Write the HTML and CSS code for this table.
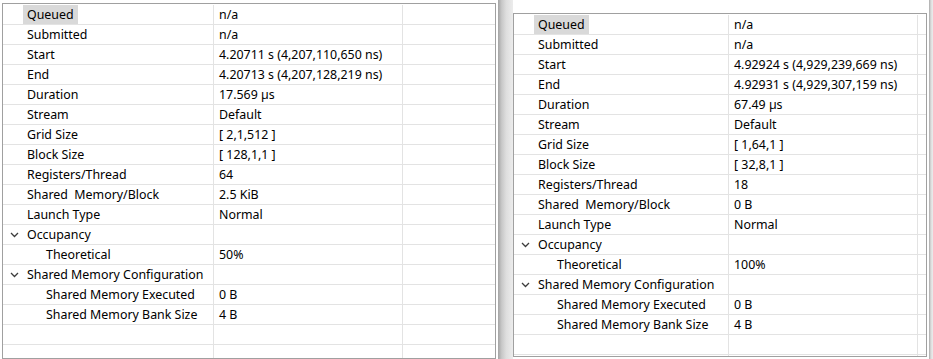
FILE: index.html
```html
<!DOCTYPE html>
<html lang="en">
<head>
  <meta charset="UTF-8">
  <title>Kernel Properties</title>
  <link rel="stylesheet" href="styles.css">
</head>
<body>
  <div class="view">

    <div class="panel left">
      <div class="row"><div class="cell name"><span class="current">Queued</span></div><div class="cell">n/a</div><div class="cell"></div></div>
      <div class="row"><div class="cell name">Submitted</div><div class="cell">n/a</div><div class="cell"></div></div>
      <div class="row"><div class="cell name">Start</div><div class="cell">4.20711 s (4,207,110,650 ns)</div><div class="cell"></div></div>
      <div class="row"><div class="cell name">End</div><div class="cell">4.20713 s (4,207,128,219 ns)</div><div class="cell"></div></div>
      <div class="row"><div class="cell name">Duration</div><div class="cell">17.569 µs</div><div class="cell"></div></div>
      <div class="row"><div class="cell name">Stream</div><div class="cell">Default</div><div class="cell"></div></div>
      <div class="row"><div class="cell name">Grid Size</div><div class="cell">[ 2,1,512 ]</div><div class="cell"></div></div>
      <div class="row"><div class="cell name">Block Size</div><div class="cell">[ 128,1,1 ]</div><div class="cell"></div></div>
      <div class="row"><div class="cell name">Registers/Thread</div><div class="cell">64</div><div class="cell"></div></div>
      <div class="row"><div class="cell name">Shared  Memory/Block</div><div class="cell">2.5 KiB</div><div class="cell"></div></div>
      <div class="row"><div class="cell name">Launch Type</div><div class="cell">Normal</div><div class="cell"></div></div>
      <div class="row"><div class="cell name group"><svg class="chevron" width="9" height="6" viewBox="0 0 9 6"><polyline points="1,1 4.5,4.5 8,1"/></svg>Occupancy</div><div class="cell"></div><div class="cell"></div></div>
      <div class="row"><div class="cell name child">Theoretical</div><div class="cell">50%</div><div class="cell"></div></div>
      <div class="row"><div class="cell name group"><svg class="chevron" width="9" height="6" viewBox="0 0 9 6"><polyline points="1,1 4.5,4.5 8,1"/></svg>Shared Memory Configuration</div><div class="cell"></div><div class="cell"></div></div>
      <div class="row"><div class="cell name child">Shared Memory Executed</div><div class="cell">0 B</div><div class="cell"></div></div>
      <div class="row"><div class="cell name child">Shared Memory Bank Size</div><div class="cell">4 B</div><div class="cell"></div></div>
      <div class="row"><div class="cell name"></div><div class="cell"></div><div class="cell"></div></div>
      <div class="row"><div class="cell name"></div><div class="cell"></div><div class="cell"></div></div>
    </div>

    <div class="splitter"></div>

    <div class="panel right">
      <div class="row"><div class="cell name"><span class="current">Queued</span></div><div class="cell">n/a</div><div class="cell"></div></div>
      <div class="row"><div class="cell name">Submitted</div><div class="cell">n/a</div><div class="cell"></div></div>
      <div class="row"><div class="cell name">Start</div><div class="cell">4.92924 s (4,929,239,669 ns)</div><div class="cell"></div></div>
      <div class="row"><div class="cell name">End</div><div class="cell">4.92931 s (4,929,307,159 ns)</div><div class="cell"></div></div>
      <div class="row"><div class="cell name">Duration</div><div class="cell">67.49 µs</div><div class="cell"></div></div>
      <div class="row"><div class="cell name">Stream</div><div class="cell">Default</div><div class="cell"></div></div>
      <div class="row"><div class="cell name">Grid Size</div><div class="cell">[ 1,64,1 ]</div><div class="cell"></div></div>
      <div class="row"><div class="cell name">Block Size</div><div class="cell">[ 32,8,1 ]</div><div class="cell"></div></div>
      <div class="row"><div class="cell name">Registers/Thread</div><div class="cell">18</div><div class="cell"></div></div>
      <div class="row"><div class="cell name">Shared  Memory/Block</div><div class="cell">0 B</div><div class="cell"></div></div>
      <div class="row"><div class="cell name">Launch Type</div><div class="cell">Normal</div><div class="cell"></div></div>
      <div class="row"><div class="cell name group"><svg class="chevron" width="9" height="6" viewBox="0 0 9 6"><polyline points="1,1 4.5,4.5 8,1"/></svg>Occupancy</div><div class="cell"></div><div class="cell"></div></div>
      <div class="row"><div class="cell name child">Theoretical</div><div class="cell">100%</div><div class="cell"></div></div>
      <div class="row"><div class="cell name group"><svg class="chevron" width="9" height="6" viewBox="0 0 9 6"><polyline points="1,1 4.5,4.5 8,1"/></svg>Shared Memory Configuration</div><div class="cell"></div><div class="cell"></div></div>
      <div class="row"><div class="cell name child">Shared Memory Executed</div><div class="cell">0 B</div><div class="cell"></div></div>
      <div class="row"><div class="cell name child">Shared Memory Bank Size</div><div class="cell">4 B</div><div class="cell"></div></div>
      <div class="row"><div class="cell name"></div><div class="cell"></div><div class="cell"></div></div>
      <div class="row"><div class="cell name"></div><div class="cell"></div><div class="cell"></div></div>
    </div>

    <div class="splitter edge"></div>
  </div>
</body>
</html>
```

FILE: styles.css
```css
html, body {
  margin: 0;
  height: 100%;
  background: #fff;
  overflow: hidden;
}
body {
  font-family: "Noto Sans", "Noto Sans CJK SC", sans-serif;
  font-size: 12.4px;
  color: #000;
}
.view {
  display: flex;
  align-items: flex-start;
  height: 359px;
  padding-left: 2px;
}
.panel {
  box-sizing: border-box;
  border: 1px solid #a0a0a0;
  padding-top: 1px;
  background: #fff;
  overflow: hidden;
}
.panel.left {
  width: 494px;
  height: 356px;
  margin-top: 3px;
  --name-col: 211px;
}
.panel.right {
  width: 414px;
  height: 344px;
  margin-top: 13px;
  --name-col: 215px;
}
.row {
  display: grid;
  grid-template-columns: var(--name-col) 189px 1fr;
  height: 20px;
  box-sizing: border-box;
  border-bottom: 1px solid #e3e3e3;
}
.cell {
  box-sizing: border-box;
  padding-left: 5px;
  line-height: 19px;
  white-space: pre;
  border-right: 1px solid #e3e3e3;
  overflow: hidden;
}
.cell:last-child {
  border-right: none;
}
.cell.name {
  padding-left: 24px;
}
.cell.group {
  position: relative;
}
.cell.child {
  padding-left: 43px;
}
.chevron {
  position: absolute;
  left: 7px;
  top: 7px;
  fill: none;
  stroke: #3c3c3c;
  stroke-width: 1.3;
}
.current {
  display: inline-block;
  margin-left: -4px;
  padding: 0 4px;
  background: #d9d9d9;
}
.splitter {
  align-self: stretch;
  width: 15px;
  margin-left: 2px;
  background: linear-gradient(to right, #a4a4a4, #c8c8c8 25%, #dedede 55%, #ececec);
}
.splitter.edge {
  flex: 1;
}
```
